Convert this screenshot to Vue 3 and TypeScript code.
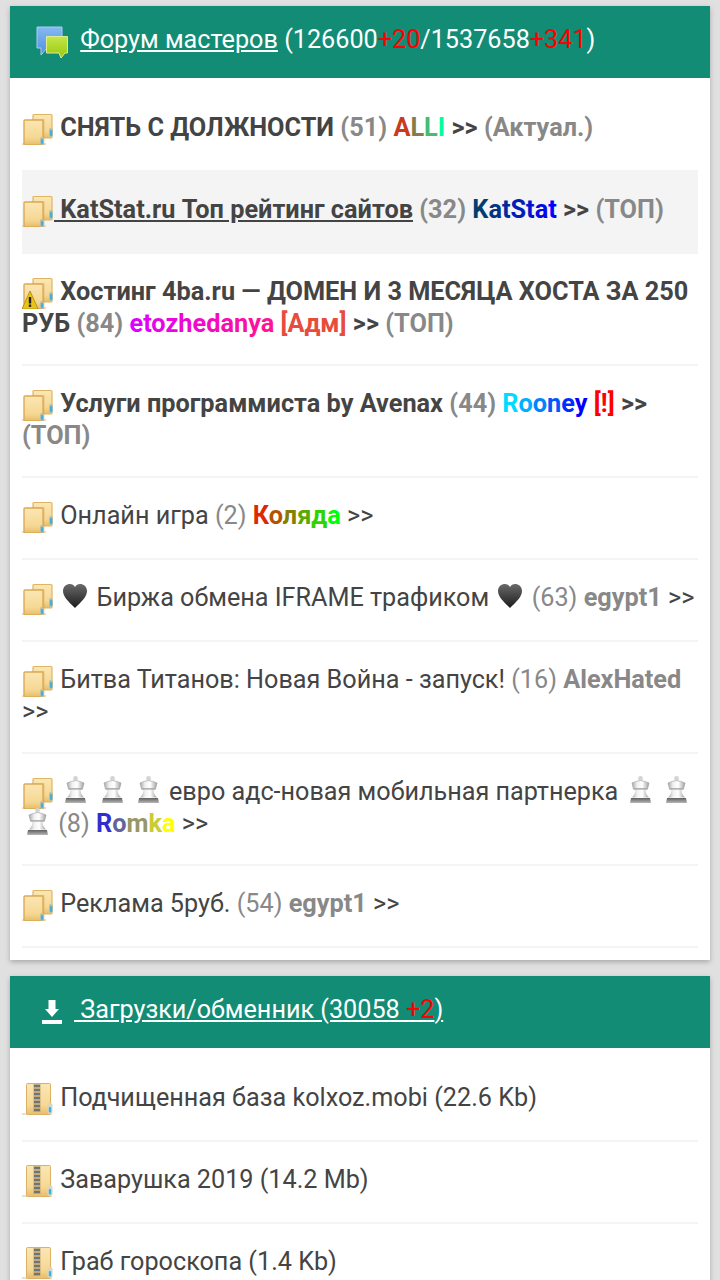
<script setup lang="ts">
type Part =
  | { kind: 'icon'; name: string }
  | { kind: 'emoji'; name: string }
  | { kind: 'text'; text: string; cls?: string }
  | { kind: 'nick'; name: string; from: string; to: string };

interface Row {
  parts: Part[];
  active?: boolean;
}

const icon = (name: string): Part => ({ kind: 'icon', name });
const emoji = (name: string): Part => ({ kind: 'emoji', name });
const text = (value: string, cls = ''): Part => ({ kind: 'text', text: value, cls });
const nick = (name: string, from: string, to: string): Part => ({ kind: 'nick', name, from, to });

const forumRows: Row[] = [
  {
    parts: [
      icon('folder'),
      text(' СНЯТЬ С ДОЛЖНОСТИ', 'b'),
      text(' (51) ', 'b grey'),
      nick('ALLI', '#c93a22', '#00ff99'),
      text(' >> ', 'b'),
      text('(Актуал.)', 'b grey'),
    ],
  },
  {
    active: true,
    parts: [
      icon('folder'),
      text('\u00a0KatStat.ru Топ рейтинг сайтов', 'b under'),
      text(' (32) ', 'b grey'),
      nick('KatStat', '#003e70', '#0000ff'),
      text(' >> ', 'b'),
      text('(ТОП)', 'b grey'),
    ],
  },
  {
    parts: [
      icon('folder-warn'),
      text(' Хостинг 4ba.ru — ДОМЕН И 3 МЕСЯЦА ХОСТА ЗА 250 РУБ', 'b'),
      text(' (84) ', 'b grey'),
      nick('etozhedanya', '#e000ff', '#ff1493'),
      text(' [Адм]', 'b adm'),
      text(' >> ', 'b'),
      text('(ТОП)', 'b grey'),
    ],
  },
  {
    parts: [
      icon('folder'),
      text(' Услуги программиста by Avenax', 'b'),
      text(' (44) ', 'b grey'),
      nick('Rooney', '#00dcff', '#0000ff'),
      text(' [!]', 'b warn'),
      text(' >> ', 'b'),
      text('(ТОП)', 'b grey'),
    ],
  },
  {
    parts: [
      icon('folder'),
      text(' Онлайн игра'),
      text(' (2) ', 'grey'),
      nick('Коляда', '#e02800', '#00ff00'),
      text(' >>'),
    ],
  },
  {
    parts: [
      icon('folder'),
      text(' '),
      emoji('heart'),
      text(' Биржа обмена IFRAME трафиком '),
      emoji('heart'),
      text(' (63) ', 'grey'),
      text('egypt1', 'b grey'),
      text(' >>'),
    ],
  },
  {
    parts: [
      icon('folder'),
      text(' Битва Титанов: Новая Война - запуск!'),
      text(' (16) ', 'grey'),
      text('AlexHated', 'b grey'),
      text(' >>'),
    ],
  },
  {
    parts: [
      icon('folder'),
      text(' '),
      emoji('queen'),
      text(' '),
      emoji('queen'),
      text(' '),
      emoji('queen'),
      text(' евро адс-новая мобильная партнерка '),
      emoji('queen'),
      text(' '),
      emoji('queen'),
      text(' '),
      emoji('queen'),
      text(' (8) ', 'grey'),
      nick('Romka', '#2f2fd0', '#ffff00'),
      text(' >>'),
    ],
  },
  {
    parts: [
      icon('folder'),
      text(' Реклама 5руб.'),
      text(' (54) ', 'grey'),
      text('egypt1', 'b grey'),
      text(' >>'),
    ],
  },
];

const fileRows: Row[] = ['Подчищенная база kolxoz.mobi (22.6 Kb)', 'Заварушка 2019 (14.2 Mb)', 'Граб гороскопа (1.4 Kb)'].map(
  (title) => ({ parts: [icon('zip'), text(' ' + title)] }),
);

const sections = [
  { id: 'forum', rows: forumRows },
  { id: 'files', rows: fileRows },
];

const hex = (c: string) => [1, 3, 5].map((i) => parseInt(c.slice(i, i + 2), 16));

// per-letter colour of a gradient nick
function letterColor(from: string, to: string, i: number, len: number): string {
  const a = hex(from);
  const b = hex(to);
  const t = len > 1 ? i / (len - 1) : 0;
  return `rgb(${a.map((v, k) => Math.round(v + (b[k] - v) * t)).join(',')})`;
}
</script>

<template>
  <div class="page">
    <svg class="defs" aria-hidden="true">
      <defs>
        <linearGradient id="sheet" x1="0" y1="0" x2="0" y2="1">
          <stop offset="0" stop-color="#fbe6b4" />
          <stop offset="0.7" stop-color="#f6d894" />
          <stop offset="1" stop-color="#e6bd6a" />
        </linearGradient>
        <linearGradient id="blue" x1="0" y1="0" x2="0" y2="1">
          <stop offset="0" stop-color="#86b8f2" />
          <stop offset="1" stop-color="#4f8fe0" />
        </linearGradient>
        <linearGradient id="green" x1="0" y1="0" x2="0" y2="1">
          <stop offset="0" stop-color="#c4e64a" />
          <stop offset="1" stop-color="#98c80c" />
        </linearGradient>
        <linearGradient id="black" x1="0" y1="0" x2="0" y2="1">
          <stop offset="0" stop-color="#6a6a6a" />
          <stop offset="1" stop-color="#1c1c1c" />
        </linearGradient>
        <linearGradient id="silver" x1="0" y1="0" x2="1" y2="0">
          <stop offset="0" stop-color="#a8a8a8" />
          <stop offset="0.3" stop-color="#f0f0f0" />
          <stop offset="0.6" stop-color="#fff" />
          <stop offset="1" stop-color="#a0a0a0" />
        </linearGradient>
        <linearGradient id="steel" x1="0" y1="0" x2="0" y2="1">
          <stop offset="0" stop-color="#5e5e5e" />
          <stop offset="1" stop-color="#b8b8b8" />
        </linearGradient>
      </defs>
      <symbol id="folder" viewBox="0 0 32 32">
        <rect x="0" y="30" width="24" height="2" fill="#d9cdb0" opacity="0.6" />
        <rect x="11" y="1.5" width="19" height="23.5" rx="1" fill="url(#sheet)" stroke="#e0b562" stroke-width="1.2" />
        <rect x="9.5" y="6" width="13" height="26" fill="#c9a255" opacity="0.4" />
        <rect x="2" y="7" width="19" height="25" rx="1" fill="url(#sheet)" stroke="#dcaa55" stroke-width="1.4" />
        <rect x="27" y="15" width="4" height="9" rx="2" fill="#b4bfa8" />
        <rect x="28" y="17" width="2.2" height="6" rx="1" fill="#3fb0e6" />
        <rect x="18" y="24" width="4" height="8" rx="2" fill="#b4bfa8" />
        <rect x="19" y="26" width="2.2" height="5" rx="1" fill="#3fb0e6" />
      </symbol>
      <symbol id="folder-warn" viewBox="0 0 32 32">
        <use href="#folder" width="32" height="32" />
        <path d="M8 14 L16 32 L0 32 Z" fill="#e8c51a" stroke="#b89410" stroke-width="1" />
        <rect x="6.8" y="20" width="2.4" height="6.5" fill="#222" />
        <rect x="6.8" y="27.5" width="2.4" height="2.4" fill="#222" />
      </symbol>
      <symbol id="zip" viewBox="0 0 32 32">
        <rect x="0" y="30" width="30" height="2" fill="#d9cdb0" opacity="0.6" />
        <rect x="4.5" y="0.5" width="24" height="31" rx="1" fill="url(#sheet)" stroke="#dcb066" stroke-width="1" />
        <rect x="11.5" y="1" width="7" height="28" fill="#a89468" opacity="0.7" />
        <path d="M12 3h6M12 7h6M12 11h6M12 15h6M12 19h6M12 23h6M12 27h6" stroke="#6f7478" stroke-width="1.8" />
        <rect x="25.5" y="20" width="5" height="11" rx="2.5" fill="#d8d6c0" />
        <rect x="26.8" y="24" width="2.4" height="5.5" rx="1" fill="#3fb0e6" />
      </symbol>
      <symbol id="heart" viewBox="0 0 30 30">
        <path d="M15 27 C9 21 3 16 3 10 C3 5.5 6.5 3 10 3 C12 3 14 4 15 6 C16 4 18 3 20 3 C23.5 3 27 5.5 27 10 C27 16 21 21 15 27 Z" fill="url(#black)" />
      </symbol>
      <symbol id="queen" viewBox="0 0 30 30">
        <circle cx="15.5" cy="3.4" r="2.4" fill="#d4d4d4" />
        <path d="M7 8 Q11.5 6 15.5 5.5 Q19.5 6 24 8 L22.5 14 H8.5 Z" fill="url(#silver)" stroke="#999" stroke-width="0.6" />
        <path d="M10.5 14 H20.5 C20.5 17.5 21.5 20 24 22.5 H7 C9.5 20 10.5 17.5 10.5 14 Z" fill="url(#silver)" />
        <rect x="8.5" y="13.2" width="14" height="1.4" fill="#a8a8a8" />
        <path d="M6 23 H25 L26 28 H5 Z" fill="url(#steel)" />
      </symbol>
    </svg>

    <section v-for="section in sections" :key="section.id" class="card">
      <div class="head">
        <svg v-if="section.id === 'forum'" class="head-icon" viewBox="0 0 32 32">
          <path d="M1 1 H26 V22 H11 L5 29 V22 H1 Z" fill="url(#blue)" stroke="#a9cdf5" stroke-width="1" />
          <path d="M10.5 10.5 H31.5 V27 H29 L25 32 L23 27 H10.5 Z" fill="url(#green)" stroke="#dcec90" stroke-width="1" />
        </svg>
        <svg v-else class="head-icon" viewBox="0 0 32 32">
          <path d="M12.5 4 H19.5 V13 H23 L16 21 L9 13 H12.5 Z" fill="#fff" />
          <rect x="6" y="24" width="20" height="4" fill="#fff" />
        </svg>
        <span v-if="section.id === 'forum'" class="head-text">&nbsp;<a class="link">Форум мастеров</a> (126600<b class="plus">+20</b>/1537658<b class="plus">+341</b>)</span>
        <span v-else class="head-text"><a class="link">&nbsp;Загрузки/обменник (30058 <b class="plus">+2</b>)</a></span>
      </div>
      <ul class="list">
        <li v-for="(row, r) in section.rows" :key="r" class="row" :class="{ active: row.active }">
          <template v-for="(part, p) in row.parts" :key="p">
            <svg v-if="part.kind === 'icon'" class="icon"><use :href="'#' + part.name" /></svg>
            <svg v-else-if="part.kind === 'emoji'" class="emoji"><use :href="'#' + part.name" /></svg>
            <span v-else-if="part.kind === 'nick'" class="b"><span
                v-for="(ch, i) in part.name"
                :key="i"
                :style="{ color: letterColor(part.from, part.to, i, part.name.length) }"
              >{{ ch }}</span></span>
            <span v-else :class="part.cls">{{ part.text }}</span>
          </template>
        </li>
      </ul>
    </section>
  </div>
</template>

<style>
html,
body {
  margin: 0;
  background: #e0e0e0;
}
</style>

<style scoped>
.page {
  padding: 6px 10px 0;
  font-family: Roboto, "Liberation Sans", sans-serif;
  font-size: 25.2px;
  color: #444;
}

.defs {
  position: absolute;
  width: 0;
  height: 0;
}

.card {
  margin-bottom: 16px;
  background: #fff;
  box-shadow: 0 2px 5px rgba(0, 0, 0, 0.25);
}

.head {
  display: flex;
  align-items: center;
  height: 72px;
  padding-left: 26px;
  background: #128c74;
  color: #fff;
}

.head-icon {
  width: 32px;
  height: 32px;
  margin-right: 6px;
  flex: none;
}

.head-text {
  margin-bottom: 5px;
}

.link {
  text-decoration: underline;
}

.plus {
  font-weight: 400;
  color: #f00;
}

.list {
  list-style: none;
  margin: 0;
  padding: 12px 12px 12px;
}

.row {
  padding: 23px 0 24.6px;
  line-height: 30px;
  border-bottom: 2px solid #f4f4f4;
}

.row.active {
  background: #f4f4f4;
}

.icon {
  width: 32px;
  height: 32px;
  vertical-align: -9.4px;
}

.emoji {
  width: 30px;
  height: 30px;
  margin: -6px 0;
  vertical-align: 1px;
}

.b {
  font-size: 25.3px;
  font-weight: 700;
}

.grey {
  color: #888;
}

.under {
  text-decoration: underline;
}

.adm {
  color: #e74c3c;
}

.warn {
  color: #f00;
}
</style>
